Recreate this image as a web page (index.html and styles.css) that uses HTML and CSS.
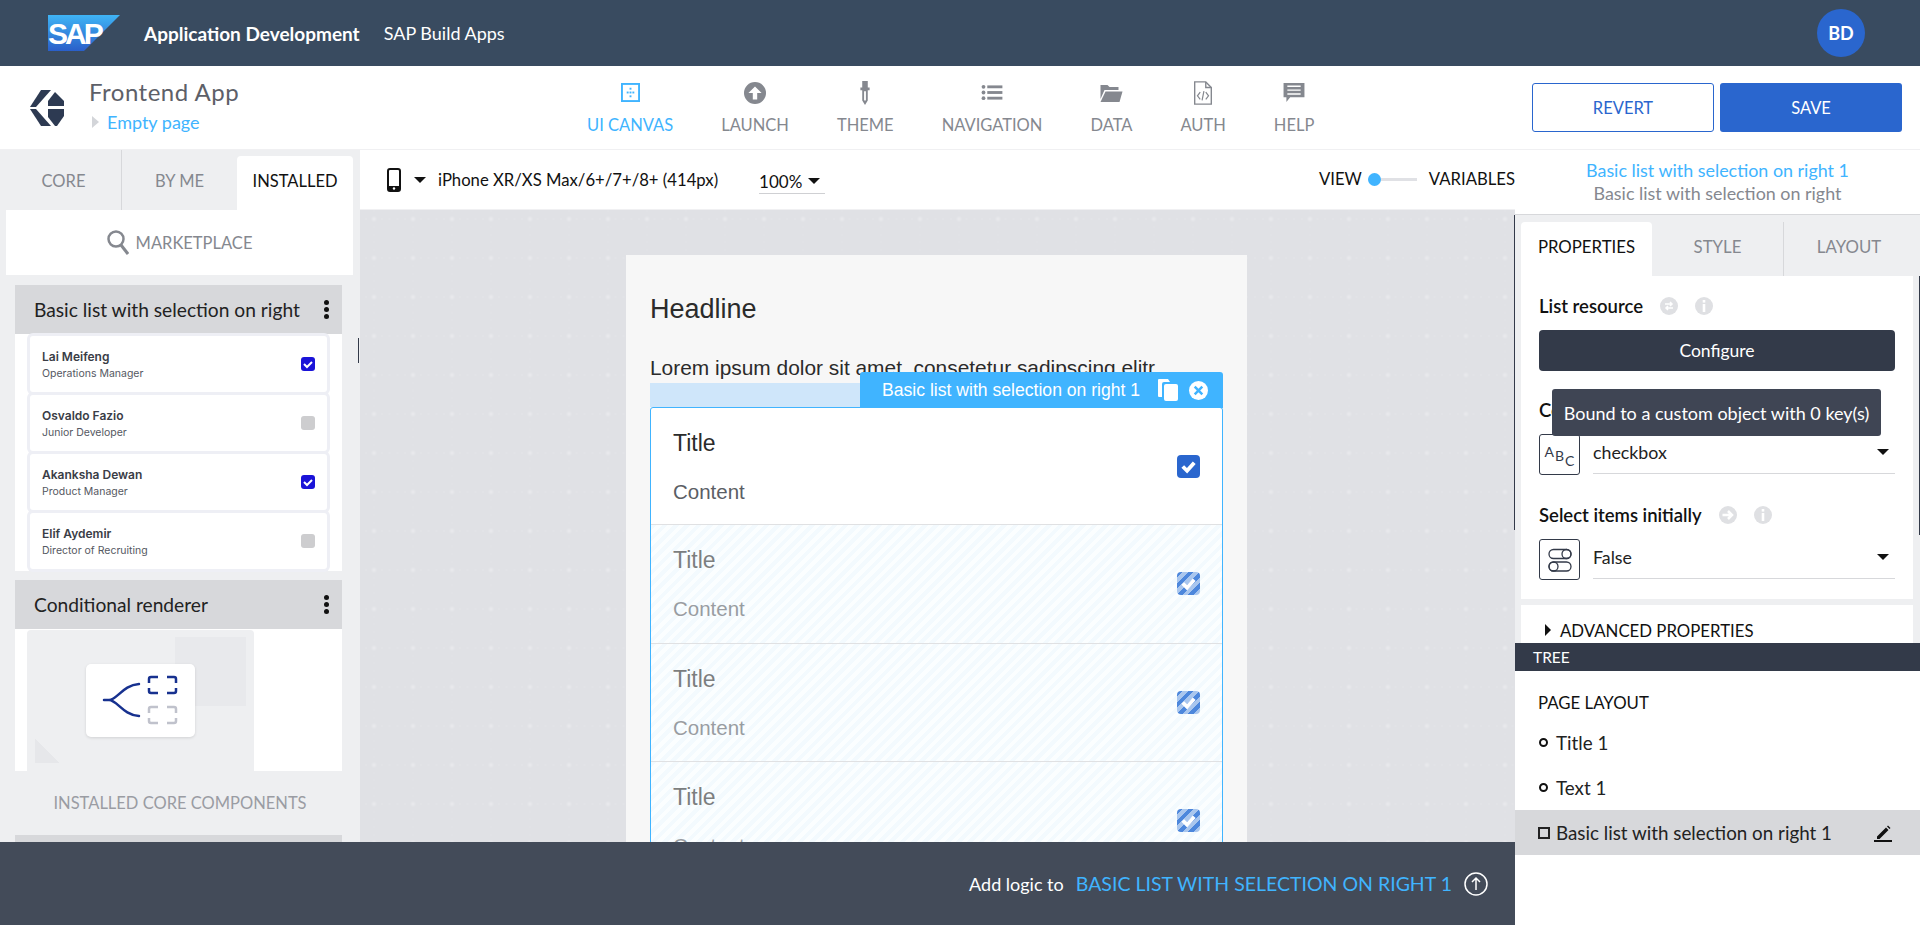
FILE: index.html
```html
<!DOCTYPE html>
<html lang="en">
<head>
    <meta charset="UTF-8">
    <title>Frontend App</title>
    <link rel="stylesheet" href="styles.css">
</head>
<body>

    <!-- shell bar -->
    <header class="shell">
        <svg class="sap-logo" viewBox="0 0 72 36" width="72" height="36">
            <defs>
                <linearGradient id="sapfill" x1="0" y1="0" x2="0" y2="1">
                    <stop offset="0" stop-color="#3fb4f5"/>
                    <stop offset="1" stop-color="#2a5fc9"/>
                </linearGradient>
            </defs>
            <polygon points="0,0 72,0 36,36 0,36" fill="url(#sapfill)"/>
            <text x="0" y="29" class="sap-word">SAP</text>
        </svg>
        <span class="shell-title">Application Development</span>
        <span class="shell-sub">SAP Build Apps</span>
        <span class="avatar">BD</span>
    </header>

    <!-- app bar -->
    <div class="appbar">
        <svg class="app-logo" viewBox="0 0 34 36" width="34" height="36">
            <polygon points="0,17 11,0 21,0 6,17" fill="#2d3a52"/>
            <polygon points="0,19 6,19 21,36 11,36" fill="#2d3a52"/>
            <polygon points="25,2 34,11 34,16 18,16 18,11" fill="#2d3a52"/>
            <polygon points="18,19 34,19 34,26 27,36 25,36 18,27" fill="#2d3a52"/>
        </svg>
        <div class="app-name">
            <div class="app-title">Frontend App</div>
            <div class="app-page"><span class="page-caret"></span>Empty page</div>
        </div>
        <nav class="nav">
            <div class="nav-item active">
                <span class="nav-icon"><svg viewBox="0 0 20 20" width="19" height="19"><rect x="1" y="1" width="18" height="18" fill="none" stroke="#40b4ff" stroke-width="2"/><g fill="#40b4ff"><rect x="9" y="5" width="2" height="2"/><rect x="6" y="9" width="2" height="2"/><rect x="9" y="9" width="2" height="2"/><rect x="12" y="9" width="2" height="2"/><rect x="9" y="13" width="2" height="2"/></g></svg></span>
                UI CANVAS
            </div>
            <div class="nav-item">
                <span class="nav-icon"><svg viewBox="0 0 20 20" width="22" height="22"><circle cx="10" cy="10" r="10" fill="#85888f"/><path d="M10 4l6 6h-4v6H8v-6H4z" fill="#fff"/></svg></span>
                LAUNCH
            </div>
            <div class="nav-item">
                <span class="nav-icon"><svg viewBox="0 0 12 26" width="12" height="24"><path d="M3 0h6v7h2v3H9v11l-3 5-3-5V10H1V7h2z" fill="#85888f"/><path d="M5 11h2v9l-1 2-1-2z" fill="#fff"/></svg></span>
                THEME
            </div>
            <div class="nav-item">
                <span class="nav-icon"><svg viewBox="0 0 22 18" width="22" height="17"><g fill="#85888f"><circle cx="2" cy="3" r="2"/><circle cx="2" cy="9" r="2"/><circle cx="2" cy="15" r="2"/><rect x="6" y="1.500" width="16" height="3"/><rect x="6" y="7.500" width="16" height="3"/><rect x="6" y="13.500" width="16" height="3"/></g></svg></span>
                NAVIGATION
            </div>
            <div class="nav-item">
                <span class="nav-icon"><svg viewBox="0 0 22 18" width="23" height="18"><path d="M0 1h7l2 2h9v3H4L0 15z" fill="#85888f"/><path d="M5 7.500h17L19 18H0z" fill="#85888f"/></svg></span>
                DATA
            </div>
            <div class="nav-item">
                <span class="nav-icon"><svg viewBox="0 0 20 26" width="20" height="24"><path d="M1 1h12l6 6v18H1z" fill="none" stroke="#85888f" stroke-width="1.500"/><path d="M13 1v6h6" fill="none" stroke="#85888f" stroke-width="1.500"/><path d="M7 12l-3 4 3 4M13 12l3 4-3 4M11 11l-2 10" fill="none" stroke="#85888f" stroke-width="1.300"/></svg></span>
                AUTH
            </div>
            <div class="nav-item">
                <span class="nav-icon"><svg viewBox="0 0 22 20" width="22" height="19"><path d="M0 0h22v15H7l-4 5v-5H0z" fill="#85888f"/><path d="M4 3.500h14M4 7.500h14M4 11.500h14" stroke="#fff" stroke-width="1.500"/></svg></span>
                HELP
            </div>
        </nav>
        <div class="app-actions">
            <button class="btn btn-outline">REVERT</button>
            <button class="btn btn-solid">SAVE</button>
        </div>
    </div>

    <div class="layout">
        <div class="work">
            <div class="work-main">

                <!-- component library -->
                <aside class="library">
                    <div class="lib-tabs">
                        <div class="lib-tab first">CORE</div>
                        <div class="lib-tab second">BY ME</div>
                        <div class="lib-tab current">INSTALLED</div>
                    </div>
                    <div class="market">
                        <svg viewBox="0 0 22 26" width="22" height="26"><circle cx="9" cy="9" r="7.500" fill="none" stroke="#85888f" stroke-width="2.500"/><path d="M14 15l7 9" stroke="#85888f" stroke-width="3"/></svg>
                        MARKETPLACE
                    </div>
                    <div class="lib-head">Basic list with selection on right<span class="kebab"><i></i><i></i><i></i></span></div>
                    <div class="lib-preview">
                        <div class="person"><div><b>Lai Meifeng</b><small>Operations Manager</small></div><span class="mini-check on"><svg viewBox="0 0 14 14"><path d="M3 7l3 3 5-5" fill="none" stroke="#fff" stroke-width="2"/></svg></span></div>
                        <div class="person"><div><b>Osvaldo Fazio</b><small>Junior Developer</small></div><span class="mini-check"></span></div>
                        <div class="person"><div><b>Akanksha Dewan</b><small>Product Manager</small></div><span class="mini-check on"><svg viewBox="0 0 14 14"><path d="M3 7l3 3 5-5" fill="none" stroke="#fff" stroke-width="2"/></svg></span></div>
                        <div class="person"><div><b>Elif Aydemir</b><small>Director of Recruiting</small></div><span class="mini-check"></span></div>
                    </div>
                    <div class="lib-head second-head">Conditional renderer<span class="kebab"><i></i><i></i><i></i></span></div>
                    <div class="lib-preview cond">
                        <div class="cond-art">
                            <div class="cond-square"></div>
                            <div class="cond-corner"></div>
                            <div class="cond-card">
                                <svg viewBox="0 0 109 73" width="109" height="73">
                                    <path d="M18 36h5C31 36 37 21 53 20M23 36c8 0 14 15 30 16" fill="none" stroke="#17318f" stroke-width="2.500" stroke-linecap="round"/>
                                    <path d="M72 13h-7a2 2 0 0 0-2 2v4M81 13h7a2 2 0 0 1 2 2v4M63 24v3a2 2 0 0 0 2 2h7M90 24v3a2 2 0 0 1-2 2h-7" fill="none" stroke="#17318f" stroke-width="2.500"/>
                                    <path d="M72 43h-7a2 2 0 0 0-2 2v4M81 43h7a2 2 0 0 1 2 2v4M63 54v3a2 2 0 0 0 2 2h7M90 54v3a2 2 0 0 1-2 2h-7" fill="none" stroke="#c0c2cc" stroke-width="2.500"/>
                                </svg>
                            </div>
                        </div>
                    </div>
                    <div class="lib-caption">INSTALLED CORE COMPONENTS</div>
                    <div class="lib-head"></div>
                    <span class="lib-scroll"></span>
                </aside>

                <!-- canvas -->
                <main class="stage">
                    <div class="toolbar">
                        <svg class="phone" viewBox="0 0 14 24" width="14" height="24"><rect x="1" y="1" width="12" height="22" rx="2" fill="#fff" stroke="#111" stroke-width="2"/><rect x="1" y="18" width="12" height="5" fill="#111"/><circle cx="7" cy="20.500" r="1.200" fill="#fff"/></svg>
                        <span class="caret device-caret"></span>
                        <span class="device">iPhone XR/XS Max/6+/7+/8+ (414px)</span>
                        <span class="zoom-pick">100%<span class="caret"></span></span>
                        <span class="view-label">VIEW</span>
                        <span class="switch"></span>
                        <span class="var-label">VARIABLES</span>
                    </div>
                    <div class="canvas">
                        <div class="screen">
                            <h2 class="headline">Headline</h2>
                            <p class="lorem">Lorem ipsum dolor sit amet, consetetur sadipscing elitr</p>
                            <div class="sel-strip">
                                <div class="sel-label">
                                    Basic list with selection on right 1
                                    <svg class="sel-copy" viewBox="0 0 22 24" width="22" height="24"><path d="M2 1h9l2 3H7a2 2 0 0 0-2 2v13H2a1.500 1.500 0 0 1-1-1V2a1 1 0 0 1 1-1z" fill="#fff"/><rect x="7" y="6" width="14" height="17" rx="2" fill="#fff"/></svg>
                                    <svg viewBox="0 0 20 20" width="19" height="19"><circle cx="10" cy="10" r="10" fill="#fff"/><path d="M6 6l8 8M14 6l-8 8" stroke="#40b4ff" stroke-width="2.600"/></svg>
                                </div>
                            </div>
                            <div class="list-box">
                                <div class="row">
                                    <div class="row-text"><div class="row-title">Title</div><div class="row-content">Content</div></div>
                                    <span class="check"><svg viewBox="0 0 24 24"><path d="M6 12l4.500 4.500L18 8" fill="none" stroke="#fff" stroke-width="4"/></svg></span>
                                </div>
                                <div class="row ghost">
                                    <div class="row-text"><div class="row-title">Title</div><div class="row-content">Content</div></div>
                                    <span class="check"><svg viewBox="0 0 24 24"><path d="M6 12l4.500 4.500L18 8" fill="none" stroke="#fff" stroke-width="4"/></svg></span>
                                </div>
                                <div class="row ghost">
                                    <div class="row-text"><div class="row-title">Title</div><div class="row-content">Content</div></div>
                                    <span class="check"><svg viewBox="0 0 24 24"><path d="M6 12l4.500 4.500L18 8" fill="none" stroke="#fff" stroke-width="4"/></svg></span>
                                </div>
                                <div class="row ghost">
                                    <div class="row-text"><div class="row-title">Title</div><div class="row-content">Content</div></div>
                                    <span class="check"><svg viewBox="0 0 24 24"><path d="M6 12l4.500 4.500L18 8" fill="none" stroke="#fff" stroke-width="4"/></svg></span>
                                </div>
                            </div>
                        </div>
                    </div>
                </main>
            </div>

            <!-- logic bar -->
            <div class="logic-bar">
                <span class="logic-text">Add logic to</span>
                <span class="logic-name">BASIC LIST WITH SELECTION ON RIGHT 1</span>
                <svg viewBox="0 0 24 24" width="24" height="24"><circle cx="12" cy="12" r="11" fill="none" stroke="#fff" stroke-width="1.500"/><path d="M12 18V6.500M8 10l4-4 4 4" fill="none" stroke="#fff" stroke-width="1.500"/></svg>
            </div>
        </div>

        <!-- properties column -->
        <aside class="side">
            <div class="side-head">
                <div class="side-name">Basic list with selection on right 1</div>
                <div class="side-type">Basic list with selection on right</div>
            </div>
            <div class="side-tabs">
                <div class="side-tab current">PROPERTIES</div>
                <div class="side-tab">STYLE</div>
                <div class="side-tab last">LAYOUT</div>
            </div>
            <div class="props">
                <div class="prop-label first-label">List resource
                    <svg class="pi" viewBox="0 0 18 18"><circle cx="9" cy="9" r="9" fill="#dfe0e3"/><path d="M5 7h7M10 5l2 2-2 2M13 11H6M8 9l-2 2 2 2" fill="none" stroke="#fff" stroke-width="1.500"/></svg>
                    <svg class="pi" viewBox="0 0 18 18"><circle cx="9" cy="9" r="9" fill="#dfe0e3"/><rect x="7.700" y="3" width="2.600" height="2.600" fill="#fff"/><rect x="7.700" y="7" width="2.600" height="8" fill="#fff"/></svg>
                </div>
                <button class="configure">Configure</button>
                <div class="prop-label control-label">Control to display</div>
                <div class="prop-field">
                    <span class="field-icon abc"><span>A</span><span>B</span><span>C</span></span>
                    <span class="field-value">checkbox<span class="caret"></span></span>
                </div>
                <div class="prop-label select-label">Select items initially
                    <svg class="pi" viewBox="0 0 18 18"><circle cx="9" cy="9" r="9" fill="#dfe0e3"/><path d="M3.500 9h9M9 5l4 4-4 4" fill="none" stroke="#fff" stroke-width="2.500"/></svg>
                    <svg class="pi" viewBox="0 0 18 18"><circle cx="9" cy="9" r="9" fill="#dfe0e3"/><rect x="7.700" y="3" width="2.600" height="2.600" fill="#fff"/><rect x="7.700" y="7" width="2.600" height="8" fill="#fff"/></svg>
                </div>
                <div class="prop-field">
                    <span class="field-icon"><svg viewBox="0 0 26 26" width="26" height="26"><g fill="none" stroke="#333a49" stroke-width="1.300"><rect x="2" y="2.500" width="22" height="9" rx="4.500"/><circle cx="19.500" cy="7" r="4.500"/><rect x="2" y="15" width="22" height="9" rx="4.500"/><circle cx="6.500" cy="19.500" r="4.500"/></g></svg></span>
                    <span class="field-value">False<span class="caret"></span></span>
                </div>
                <div class="tooltip">Bound to a custom object with 0 key(s)</div>
            </div>
            <div class="advanced"><span class="caret-right"></span>ADVANCED PROPERTIES</div>
            <div class="tree-head">TREE</div>
            <div class="tree">
                <div class="tree-title">PAGE LAYOUT</div>
                <div class="tree-row"><span class="dot"></span>Title 1</div>
                <div class="tree-row"><span class="dot"></span>Text 1</div>
                <div class="tree-row picked"><span class="box"></span>Basic list with selection on right 1
                    <svg class="pencil" viewBox="0 0 18 18" width="18" height="18"><path d="M3 12.500L12 3.500l2.500 2.500-9 9H3zM13 2.500l1-1 2.500 2.500-1 1z" fill="#111"/><rect x="0" y="16" width="18" height="2" fill="#111"/></svg>
                </div>
            </div>
        </aside>
    </div>

</body>
</html>
```

FILE: styles.css
```css
* {
    box-sizing: border-box;
}

body {
    margin: 0;
    height: 100vh;
    overflow: hidden;
    display: flex;
    flex-direction: column;
    background: #fff;
    color: #111;
    font-family: "Lato", "Liberation Sans", sans-serif;
}

svg {
    display: block;
    flex: none;
}

.caret {
    display: inline-block;
    width: 0;
    height: 0;
    border-left: 6px solid transparent;
    border-right: 6px solid transparent;
    border-top: 6px solid #111;
}

/* shell bar */
.shell {
    height: 66px;
    flex: none;
    background: #394b60;
    color: #fff;
    display: flex;
    align-items: center;
    padding-left: 48px;
    padding-right: 55px;
}

.sap-word {
    font-family: "Liberation Sans", sans-serif;
    font-weight: 700;
    font-size: 30px;
    letter-spacing: -3px;
    fill: #fff;
}

.shell-title {
    margin-left: 24px;
    font-size: 19px;
    font-weight: 700;
}

.shell-sub {
    margin-left: 24px;
    font-size: 18px;
}

.avatar {
    margin-left: auto;
    width: 48px;
    height: 48px;
    border-radius: 50%;
    background: #2a66ce;
    display: flex;
    align-items: center;
    justify-content: center;
    font-weight: 700;
    font-size: 18px;
}

/* app bar */
.appbar {
    height: 84px;
    flex: none;
    display: flex;
    align-items: center;
    padding-left: 30px;
    border-bottom: 1px solid #f0f0f2;
}

.app-name {
    margin-left: 25px;
    width: 430px;
    padding-bottom: 6px;
}

.app-title {
    font-size: 24px;
    line-height: 30px;
    color: #5d6068;
    letter-spacing: 0.500px;
}

.app-page {
    margin-top: 4px;
    font-size: 18px;
    line-height: 22px;
    color: #40b4ff;
    display: flex;
    align-items: center;
}

.page-caret {
    width: 0;
    height: 0;
    border-top: 6px solid transparent;
    border-bottom: 6px solid transparent;
    border-left: 7px solid #d3d5d9;
    margin-left: 3px;
    margin-right: 8px;
}

.nav {
    display: flex;
    gap: 48px;
    margin-left: 68px;
}

.nav-item {
    height: 54px;
    display: flex;
    flex-direction: column;
    align-items: center;
    font-size: 16.500px;
    line-height: 20px;
    color: #85888f;
}

.nav-icon {
    height: 24px;
    margin-bottom: 10px;
    display: flex;
    align-items: center;
}

.nav-item.active {
    color: #40b4ff;
}

.app-actions {
    margin-left: auto;
    margin-right: 18px;
    display: flex;
    gap: 6px;
}

.btn {
    width: 182px;
    height: 49px;
    border-radius: 3px;
    font-family: inherit;
    font-size: 16.500px;
}

.btn-outline {
    background: #fff;
    border: 1px solid #2a66ce;
    color: #2a66ce;
}

.btn-solid {
    background: #2a66ce;
    border: none;
    color: #fff;
}

/* main area */
.layout {
    flex: 1;
    min-height: 0;
    display: flex;
}

.work {
    width: 1515px;
    display: flex;
    flex-direction: column;
}

.work-main {
    height: 692px;
    overflow: hidden;
    display: flex;
}

/* library */
.library {
    position: relative;
    width: 360px;
    flex: none;
    background: #eeeff1;
}

.lib-tabs {
    height: 60px;
    display: flex;
    align-items: flex-end;
    font-size: 16.500px;
    color: #85888f;
    text-align: center;
}

.lib-tab {
    height: 60px;
    line-height: 62px;
}

.lib-tab.first {
    width: 122px;
    padding-left: 6px;
    border-right: 1px solid #d7d8db;
}

.lib-tab.second {
    width: 115px;
}

.lib-tab.current {
    width: 116px;
    height: 54px;
    line-height: 50px;
    background: #fff;
    color: #111;
    border-radius: 4px 4px 0 0;
}

.market {
    width: 347px;
    height: 65px;
    margin-left: 6px;
    background: #fff;
    display: flex;
    align-items: center;
    justify-content: center;
    gap: 7px;
    color: #85888f;
    font-size: 16.500px;
}

.lib-head {
    width: 327px;
    height: 49px;
    margin: 10px 0 0 15px;
    padding-left: 19px;
    background: #d7d8db;
    display: flex;
    align-items: center;
    justify-content: space-between;
    padding-right: 13px;
    font-size: 19.200px;
    color: #222;
}

.second-head {
    margin-top: 9px;
}

.kebab {
    display: flex;
    flex-direction: column;
    gap: 2px;
}

.kebab i {
    width: 5px;
    height: 5px;
    border-radius: 50%;
    background: #111;
}

.lib-preview {
    width: 327px;
    height: 237px;
    margin-left: 15px;
    padding: 2px 15px 0;
    background: #fff;
    display: flex;
    flex-direction: column;
    gap: 3px;
}

.person {
    height: 56px;
    flex: none;
    background: #fff;
    border-radius: 3px;
    box-shadow: 0 0 0 3px #eeeff5;
    padding: 0 12px;
    display: flex;
    align-items: center;
    justify-content: space-between;
    font-family: "Inter", sans-serif;
}

.person b {
    display: block;
    font-size: 12px;
    font-weight: 600;
    color: #3a3d46;
    margin-bottom: 3px;
}

.person small {
    display: block;
    font-size: 10.500px;
    color: #555862;
}

.mini-check {
    width: 14px;
    height: 14px;
    border-radius: 3px;
    background: #cdcdcf;
}

.mini-check.on {
    background: #1a13d8;
}

.lib-preview.cond {
    height: 142px;
    padding: 1px 0 0 12px;
}

.cond-art {
    position: relative;
    width: 227px;
    height: 141px;
    background: #eeeff1;
    border-radius: 4px 4px 0 0;
}

.cond-square {
    position: absolute;
    left: 148px;
    top: 7px;
    width: 71px;
    height: 69px;
    background: #e8e9ec;
}

.cond-corner {
    position: absolute;
    left: 8px;
    top: 108px;
    width: 25px;
    height: 25px;
    background: linear-gradient(to top right, #e6e7ea 50%, transparent 50%);
}

.cond-card {
    position: absolute;
    left: 59px;
    top: 34px;
    width: 109px;
    height: 73px;
    background: #fff;
    border-radius: 5px;
    box-shadow: 0 1px 3px rgba(0, 0, 0, 0.12);
}

.lib-caption {
    height: 64px;
    display: flex;
    align-items: center;
    justify-content: center;
    font-size: 16.500px;
    color: #9a9ca3;
}

.lib-caption + .lib-head {
    margin-top: 0;
}

.lib-scroll {
    position: absolute;
    right: 1px;
    top: 188px;
    width: 1px;
    height: 25px;
    background: #333a49;
}

/* stage */
.stage {
    flex: 1;
    min-width: 0;
    display: flex;
    flex-direction: column;
}

.toolbar {
    height: 60px;
    flex: none;
    display: flex;
    align-items: center;
    padding-left: 27px;
    border-bottom: 1px solid #f0f0f2;
    font-size: 16.700px;
}

.device-caret {
    margin-left: 13px;
}

.device {
    margin-left: 12px;
}

.zoom-pick {
    margin-left: 41px;
    width: 66px;
    height: 28px;
    border-bottom: 1px solid #cfd0d3;
    display: flex;
    align-items: center;
    gap: 6px;
    padding-top: 4px;
    font-size: 17px;
}

.view-label {
    margin-left: auto;
    margin-bottom: 2px;
}

.switch {
    position: relative;
    width: 49px;
    height: 3px;
    margin-left: 6px;
    background: #e0e1e5;
}

.switch::before {
    content: "";
    position: absolute;
    left: 0;
    top: -5px;
    width: 13px;
    height: 13px;
    border-radius: 50%;
    background: #40b4ff;
}

.var-label {
    margin-left: 12px;
    margin-bottom: 2px;
}

.canvas {
    flex: 1;
    min-height: 0;
    padding: 45px 0 0 266px;
    background-color: #e0e1e5;
    background-image:
        radial-gradient(circle, rgba(255, 255, 255, 0.16) 0 2px, transparent 3px),
        radial-gradient(circle, rgba(255, 255, 255, 0.14) 0 1px, transparent 1px),
        radial-gradient(circle, rgba(255, 255, 255, 0.08) 0 1px, transparent 1px);
    background-size: 39px 39px, 7.800px 39px, 39px 7.800px;
    background-position: -5.500px -10.500px, -5.500px -10.500px, -5.500px -10.500px;
}

.screen {
    width: 621px;
    height: 660px;
    background: #f7f7f7;
    padding: 35px 24px 0;
    font-family: "Liberation Sans", sans-serif;
}

.headline {
    margin: 0;
    font-size: 27px;
    font-weight: 400;
    line-height: 38px;
    color: #2b2b2b;
}

.lorem {
    margin: 28px 0 0;
    height: 24px;
    overflow: hidden;
    font-size: 20.900px;
    line-height: 24px;
    color: #2b2b2b;
}

.sel-strip {
    height: 24px;
    margin-top: 3px;
    width: 573px;
    background: #cfe6fa;
    position: relative;
}

.sel-label {
    position: absolute;
    right: 0;
    bottom: -1px;
    width: 363px;
    height: 36px;
    background: #40b4ff;
    color: #fff;
    border-radius: 3px 3px 0 0;
    font-size: 17.600px;
    display: flex;
    align-items: center;
    padding-left: 22px;
    gap: 10px;
}

.sel-copy {
    margin-left: 7px;
}

.list-box {
    width: 573px;
    background: #fff;
    border: 1px solid #40b4ff;
    border-radius: 3px 3px 0 0;
}

.row {
    height: 116px;
    padding: 0 22px 0 22px;
    display: flex;
    align-items: center;
    justify-content: space-between;
}

.row.ghost {
    height: 118.500px;
    border-top: 1px solid #e0e1e3;
    background: repeating-linear-gradient(135deg, #f3fafe 0 4px, #fbfeff 4px 8px);
}

.row-title {
    font-size: 23px;
    line-height: 26px;
    color: #2b2b2b;
}

.row-content {
    margin-top: 25px;
    font-size: 20.500px;
    line-height: 22px;
    color: #5b5e65;
}

.row.ghost .row-title,
.row.ghost .row-content {
    opacity: 0.6;
}

.check {
    width: 23px;
    height: 23px;
    border-radius: 4px;
    background: #2a66ce;
}

.row.ghost .check {
    background: repeating-linear-gradient(135deg, #4d87dc 0 4px, #a9c6ee 4px 8px);
}

.logic-bar {
    flex: 1;
    background: #434b59;
    color: #fff;
    display: flex;
    align-items: center;
    justify-content: flex-end;
    padding-right: 27px;
}

.logic-text {
    font-size: 18px;
}

.logic-name {
    margin-left: 12px;
    margin-right: 12px;
    font-size: 19.500px;
    color: #40b4ff;
}

/* properties column */
.side {
    position: relative;
    flex: 1;
    min-width: 0;
    display: flex;
    flex-direction: column;
    background: #eeeff1;
}

.side::before {
    content: "";
    position: absolute;
    left: -1px;
    top: 65px;
    width: 1px;
    height: 315px;
    background: #333a49;
}

.side::after {
    content: "";
    position: absolute;
    right: 0;
    top: 126px;
    width: 1px;
    height: 259px;
    background: #333a49;
}

.side-head {
    height: 65px;
    flex: none;
    background: #fff;
    border-bottom: 1px solid #d7d8db;
    text-align: center;
    font-size: 17.900px;
    line-height: 21px;
    padding-top: 10px;
}

.side-name {
    color: #40b4ff;
    margin-bottom: 2px;
}

.side-type {
    color: #85888f;
}

.side-tabs {
    height: 61px;
    flex: none;
    display: flex;
    align-items: flex-end;
    padding-left: 6px;
    font-size: 16.800px;
    color: #85888f;
    text-align: center;
}

.side-tab {
    width: 131px;
    height: 54px;
    line-height: 50px;
}

.side-tab.current {
    background: #fff;
    color: #111;
    border-radius: 4px 4px 0 0;
}

.side-tab.last {
    border-left: 1px solid #d7d8db;
}

.props {
    position: relative;
    height: 323px;
    flex: none;
    width: 392px;
    margin-left: 6px;
    background: #fff;
    padding: 18px 18px 0 18px;
}

.prop-label {
    display: flex;
    align-items: center;
    height: 24px;
    font-size: 18.500px;
    font-weight: 600;
}

.pi {
    width: 18px;
    height: 18px;
    margin-left: 17px;
}

.configure {
    display: block;
    width: 356px;
    height: 41px;
    margin-top: 12px;
    border: none;
    border-radius: 4px;
    background: #333a49;
    color: #fff;
    font-family: inherit;
    font-size: 17.500px;
}

.control-label {
    margin-top: 27px;
}

.prop-field {
    display: flex;
    gap: 13px;
    margin-top: 12px;
    height: 41px;
}

.field-icon {
    width: 41px;
    height: 41px;
    border: 1px solid #333a49;
    border-radius: 3px;
    display: flex;
    align-items: center;
    justify-content: center;
    flex: none;
}

.abc {
    align-items: flex-start;
    gap: 1px;
    padding-top: 8px;
    font-size: 14px;
    color: #333a49;
}

.abc span:nth-child(2) {
    margin-top: 4px;
}

.abc span:nth-child(3) {
    margin-top: 9px;
}

.field-value {
    flex: 1;
    height: 40px;
    border-bottom: 1px solid #d7d8db;
    display: flex;
    align-items: center;
    justify-content: space-between;
    padding-right: 6px;
    padding-bottom: 3px;
    font-size: 17.800px;
    color: #222;
}

.select-label {
    margin-top: 28px;
}

.tooltip {
    position: absolute;
    left: 31px;
    top: 113px;
    width: 329px;
    height: 47px;
    background: #3f4554;
    border-radius: 3px;
    color: #fff;
    font-size: 18px;
    display: flex;
    align-items: center;
    justify-content: center;
}

.advanced {
    height: 38px;
    flex: none;
    width: 392px;
    margin: 6px 0 0 6px;
    background: #fff;
    display: flex;
    align-items: center;
    padding-left: 24px;
    padding-top: 12px;
    font-size: 16.800px;
}

.caret-right {
    width: 0;
    height: 0;
    border-top: 6px solid transparent;
    border-bottom: 6px solid transparent;
    border-left: 6px solid #111;
    margin-right: 9px;
}

.tree-head {
    height: 28px;
    flex: none;
    background: #333a49;
    color: #fff;
    font-size: 15.500px;
    line-height: 28px;
    padding-left: 18px;
}

.tree {
    flex: 1;
    background: #fff;
}

.tree-title {
    padding: 21px 0 0 23px;
    height: 49px;
    font-size: 16.800px;
}

.tree-row {
    height: 45px;
    display: flex;
    align-items: center;
    gap: 8px;
    padding-left: 24px;
    font-size: 18.800px;
    color: #222;
}

.tree-row.picked {
    background: #d7d8db;
    gap: 6px;
    padding-left: 23px;
}

.dot {
    width: 9px;
    height: 9px;
    border: 2px solid #111;
    border-radius: 50%;
}

.box {
    width: 12px;
    height: 12px;
    border: 2px solid #222;
}

.pencil {
    margin-left: auto;
    margin-right: 28px;
}
```
